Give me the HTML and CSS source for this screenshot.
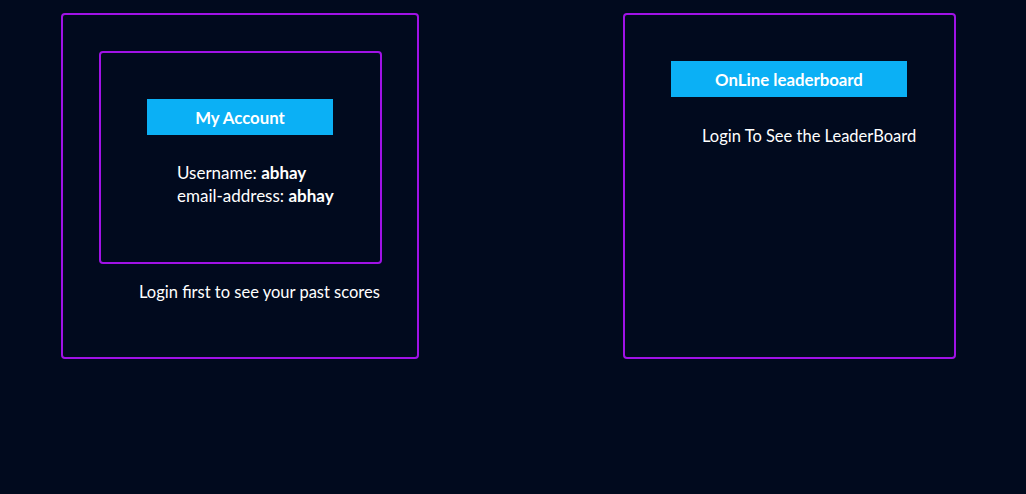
FILE: index.html
```html
<!DOCTYPE html>
<html>
<head>
<meta charset="utf-8">
<link rel="stylesheet" href="styles.css">
</head>
<body>
<main class="page">
  <section class="panel panel-account">
    <div class="account-card">
      <div class="heading heading-account">My Account</div>
      <div class="details">
        <div>Username: <b>abhay</b></div>
        <div>email-address: <b>abhay</b></div>
      </div>
    </div>
    <p class="note note-scores">Login first to see your past scores</p>
  </section>
  <section class="panel panel-board">
    <div class="heading heading-board">OnLine leaderboard</div>
    <p class="note note-board">Login To See the LeaderBoard</p>
  </section>
</main>
</body>
</html>
```
FILE: styles.css
```css
html, body {
  margin: 0;
  padding: 0;
  background: #010a1e;
  height: 100%;
}
body {
  font-family: Lato, "Open Sans", sans-serif;
  font-size: 16.5px;
  color: #ffffff;
}
.page {
  display: flex;
  align-items: flex-start;
  padding: 13px 0 0 61px;
  gap: 204px;
}
.panel {
  box-sizing: border-box;
  border: 2px solid #a012e6;
  border-radius: 4px;
  height: 346px;
}
.panel-account {
  width: 358px;
  padding: 36px 0 0 36px;
}
.account-card {
  box-sizing: border-box;
  width: 283px;
  height: 213px;
  border: 2px solid #a012e6;
  border-radius: 4px;
  padding-top: 46px;
  display: flex;
  flex-direction: column;
}
.heading {
  background: #0bb0f5;
  height: 36px;
  display: flex;
  align-items: center;
  justify-content: center;
  font-weight: bold;
  font-size: 16.8px;
  align-self: flex-start;
  margin-left: 46px;
}
.heading-account {
  width: 186px;
}
.details {
  margin-top: 26px;
  padding-left: 76px;
  line-height: 23px;
  font-size: 17px;
}
.note {
  margin: 0;
  line-height: 20px;
}
.note-scores {
  padding: 18px 0 0 40px;
}
.panel-board {
  width: 333px;
  padding-top: 46px;
  display: flex;
  flex-direction: column;
}
.heading-board {
  width: 236px;
}
.note-board {
  padding: 29px 0 0 77px;
}
```
